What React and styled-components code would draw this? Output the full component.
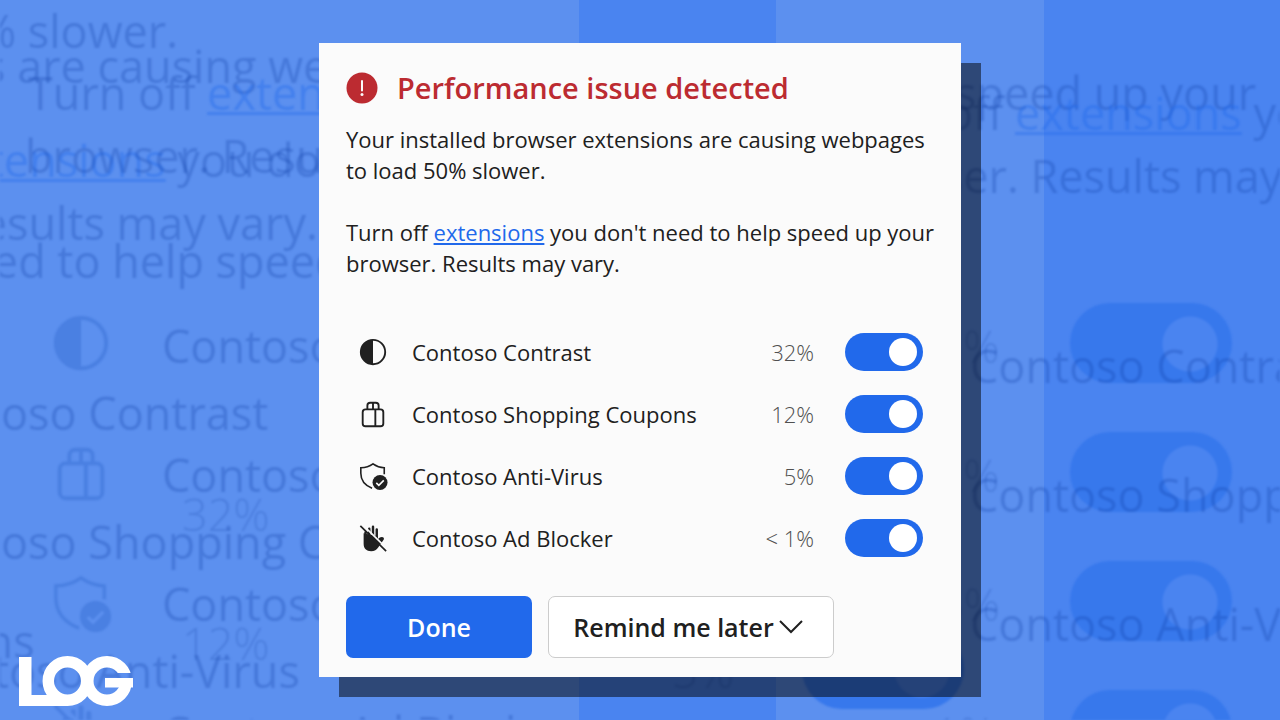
import React, { useState } from 'react';
import styled, { createGlobalStyle } from 'styled-components';

const extensions = [
  { id: 'contrast', name: 'Contoso Contrast', impact: '32%', Icon: ContrastIcon },
  { id: 'coupons', name: 'Contoso Shopping Coupons', impact: '12%', Icon: GiftIcon },
  { id: 'antivirus', name: 'Contoso Anti-Virus', impact: '5%', Icon: ShieldIcon },
  { id: 'adblock', name: 'Contoso Ad Blocker', impact: '< 1%', Icon: HandIcon },
];

// faded lines scattered over the backdrop, y is the top of the line box
const fadedLines = [
  { x: -230, y: -1, text: 'to load 50% slower.' },
  { x: -16, y: 34, text: 's are causing webpages' },
  { x: 28, y: 61, text: 'Turn off ', link: 'extensions' },
  { x: -61, y: 128, link: 'extensions', after: ' you don\'t need' },
  { x: 25, y: 124, text: 'browser. Results may vary.' },
  { x: -46, y: 191, text: 'Results may vary.' },
  { x: -60, y: 229, text: 'need to help speed up' },
  { x: 162, y: 314, text: 'Contoso Contrast' },
  { x: -98, y: 381, text: 'Contoso Contrast' },
  { x: 162, y: 443, text: 'Contoso Shopping' },
  { x: 182, y: 482, text: '32%', light: true },
  { x: -98, y: 510, text: 'Contoso Shopping Coupons' },
  { x: 162, y: 572, text: 'Contoso Anti-Virus' },
  { x: 182, y: 611, text: '12%', light: true },
  { x: -152, y: 609, text: 'Coupons' },
  { x: -90, y: 639, text: 'Contoso Anti-Virus' },
  { x: 162, y: 701, text: 'Contoso Ad Blocker' },
  { x: 672, y: 639, text: '5%', light: true },
  { x: 834, y: -49, text: 'to load 50% slower.' },
  { x: 955, y: 61, text: 'speed up your' },
  { x: 946, y: 81, text: 'off ', link: 'extensions', after: ' you' },
  { x: 834, y: 144, text: 'browser. Results may' },
  { x: 912, y: 314, text: '32%', light: true },
  { x: 912, y: 443, text: '12%', light: true },
  { x: 938, y: 572, text: '5%', light: true },
  { x: 896, y: 701, text: '< 1%', light: true },
  { x: 970, y: 334, text: 'Contoso Contrast' },
  { x: 970, y: 463, text: 'Contoso Shopping' },
  { x: 970, y: 592, text: 'Contoso Anti-Virus' },
];

const fadedSwitches = [
  { x: 1070, y: 303 },
  { x: 1070, y: 432 },
  { x: 1070, y: 561 },
  { x: 1070, y: 690 },
  { x: 802, y: 629 },
];

const fadedIcons = [
  { x: 50, y: 312, Icon: ContrastIcon },
  { x: 50, y: 442, Icon: GiftIcon },
  { x: 50, y: 572, Icon: ShieldIcon },
  { x: 50, y: 700, Icon: HandIcon },
];

function ContrastIcon() {
  return (
    <svg viewBox="0 0 32 32" aria-hidden="true">
      <circle cx="16" cy="16" r="13" fill="none" stroke="currentColor" strokeWidth="2" />
      <path d="M16 3a13 13 0 0 0 0 26z" fill="currentColor" />
    </svg>
  );
}

function GiftIcon() {
  return (
    <svg viewBox="0 0 32 32" fill="none" stroke="currentColor" strokeWidth="2" aria-hidden="true">
      <rect x="5" y="11" width="22" height="18" rx="3" />
      <path d="M10 11V7a3 3 0 0 1 3-3h6a3 3 0 0 1 3 3v4M16 4v7M18.5 11v18" />
    </svg>
  );
}

function ShieldIcon() {
  return (
    <svg viewBox="0 0 32 32" fill="none" aria-hidden="true">
      <path
        d="M15 29C7.500 26 3 21 3 13V7.200C8 7 12.500 5.500 16 3c3.500 2.500 8 4 12 4.200V14"
        stroke="currentColor"
        strokeWidth="1.700"
      />
      <circle cx="23.500" cy="23" r="8" fill="currentColor" />
      <path d="M19.500 23.300l2.700 2.600 5.300-5.300" stroke="var(--cut, #fbfbfb)" strokeWidth="1.700" />
    </svg>
  );
}

function HandIcon() {
  return (
    <svg viewBox="0 0 32 32" fill="none" aria-hidden="true">
      <path
        d="M6 11v11c0 5 3 8 8 8 3.500 0 6-1.500 7.500-4l6-8.500c.6-1.200-.2-2.500-2-2.500-2 0-3.500 1-4.500 3v-4z"
        fill="currentColor"
      />
      <path
        d="M8 16v-6M12 16V6M16 16V4M20 18V7"
        stroke="currentColor"
        strokeWidth="2.600"
        strokeLinecap="round"
      />
      <path d="M4.500 1.500L31.500 28" stroke="var(--cut, #fbfbfb)" strokeWidth="1.800" />
      <path d="M2.500 3l27.500 27" stroke="currentColor" strokeWidth="1.800" />
    </svg>
  );
}

function Backdrop() {
  return (
    <BackdropLayer aria-hidden="true">
      {fadedSwitches.map((item, i) => (
        <FadedSwitch key={i} $x={item.x} $y={item.y} />
      ))}
      {fadedIcons.map(({ x, y, Icon }, i) => (
        <FadedIcon key={i} $x={x} $y={y}>
          <Icon />
        </FadedIcon>
      ))}
      {fadedLines.map((item, i) => (
        <FadedLine key={i} $x={item.x} $y={item.y} $light={item.light}>
          {item.text}
          {item.link && <FadedLink>{item.link}</FadedLink>}
          {item.after}
        </FadedLine>
      ))}
    </BackdropLayer>
  );
}

function ExtensionRow({ id, name, impact, Icon }) {
  const [on, setOn] = useState(true);

  return (
    <Row>
      <RowIcon>
        <Icon />
      </RowIcon>
      <RowName htmlFor={id}>{name}</RowName>
      <Impact>{impact}</Impact>
      <Switch id={id} type="checkbox" role="switch" checked={on} onChange={() => setOn(!on)} />
    </Row>
  );
}

function App() {
  return (
    <Page>
      <GlobalStyle />
      <Backdrop />
      <Dialog role="dialog" aria-labelledby="title">
        <Header>
          <Alert viewBox="0 0 32 32" aria-hidden="true">
            <circle cx="16" cy="16" r="15.500" fill="#bc2b31" />
            <rect x="15" y="8" width="2" height="11.500" rx="1" fill="#fbfbfb" />
            <circle cx="16" cy="22.500" r="1.500" fill="#fbfbfb" />
          </Alert>
          <Title id="title">Performance issue detected</Title>
        </Header>
        <Message>
          Your installed browser extensions are causing webpages
          <br />
          to load 50% slower.
        </Message>
        <Message>
          Turn off <Link href="#extensions">extensions</Link> you don't need to help speed up your
          <br />
          browser. Results may vary.
        </Message>
        <List>
          {extensions.map((item) => (
            <ExtensionRow key={item.id} {...item} />
          ))}
        </List>
        <Actions>
          <DoneButton type="button">Done</DoneButton>
          <LaterButton type="button" aria-haspopup="menu">
            Remind me later
            <Chevron viewBox="0 0 24 24" aria-hidden="true">
              <path d="M1 6l11 11L23 6" fill="none" stroke="currentColor" strokeWidth="2" />
            </Chevron>
          </LaterButton>
        </Actions>
      </Dialog>
      <Logo viewBox="0 0 114 50" role="img" aria-label="LOG">
        <mask id="gap" maskUnits="userSpaceOnUse" x="0" y="0" width="114" height="50">
          <rect width="114" height="50" fill="#ffffff" />
          <rect x="98" y="17" width="16" height="5" fill="#000000" />
        </mask>
        <g fill="#ffffff">
          <rect x="0" y="1" width="12.500" height="49" />
          <rect x="0" y="39" width="48" height="11" />
          <rect x="86" y="22" width="28" height="9.500" />
        </g>
        <g fill="none" stroke="#ffffff" strokeWidth="11.500" mask="url(#gap)">
          <circle cx="48.500" cy="25" r="19.200" />
          <circle cx="88" cy="25" r="19.200" />
        </g>
      </Logo>
    </Page>
  );
}

const GlobalStyle = createGlobalStyle`
  * {
    box-sizing: border-box;
  }

  body {
    margin: 0;
    font-family: 'Open Sans', 'Noto Sans', sans-serif;
    font-size: 22px;
    color: #202020;
  }
`;

const Page = styled.main`
  position: relative;
  min-height: 100vh;
  display: flex;
  align-items: center;
  justify-content: center;
  overflow: hidden;
  background: linear-gradient(
    to right,
    #5c90ef 45.2%,
    #4a84f0 45.2% 60.6%,
    #5c90ef 60.6% 81.6%,
    #4a84f0 81.6%
  );
`;

const BackdropLayer = styled.div`
  position: absolute;
  inset: 0;
  overflow: hidden;
  filter: blur(1px);
`;

const FadedLine = styled.span`
  position: absolute;
  left: ${(props) => props.$x}px;
  top: ${(props) => props.$y}px;
  font-size: 45px;
  font-weight: ${(props) => (props.$light ? 300 : 400)};
  line-height: 64px;
  white-space: pre;
  color: ${(props) => (props.$light ? 'rgba(16, 62, 165, 0.22)' : 'rgba(16, 62, 165, 0.28)')};
`;

const FadedLink = styled.span`
  color: rgba(32, 104, 236, 0.4);
  text-decoration: underline;
  text-decoration-thickness: 3px;
`;

const FadedSwitch = styled.span`
  position: absolute;
  left: ${(props) => props.$x}px;
  top: ${(props) => props.$y}px;
  width: 162px;
  height: 80px;
  border-radius: 40px;
  background: radial-gradient(circle at 120px 41px, #4a84f0 27px, #3778ec 28px);
`;

const FadedIcon = styled.span`
  --cut: #5c90ef;
  position: absolute;
  left: ${(props) => props.$x}px;
  top: ${(props) => props.$y}px;
  width: 62px;
  height: 62px;
  color: #1650bc;
  opacity: 0.25;
`;

const Dialog = styled.section`
  position: relative;
  width: 100%;
  max-width: 642px;
  padding: 24px 24px 19px 27px;
  background-color: #fbfbfb;
  box-shadow: 20px 20px 0 rgba(0, 0, 0, 0.5);
`;

const Header = styled.header`
  display: flex;
  align-items: center;
  gap: 19px;
  height: 42px;
  margin-bottom: 15px;
`;

const Alert = styled.svg`
  width: 32px;
  height: 32px;
`;

const Title = styled.h1`
  margin: 0;
  font-size: 29px;
  font-weight: 600;
  line-height: 38px;
  color: #bc2b31;
`;

const Message = styled.p`
  margin: 0 0 31px;
  line-height: 31px;
`;

const Link = styled.a`
  color: #2169eb;
  text-underline-offset: 2px;
`;

const List = styled.ul`
  margin: 42px 0 27px;
  padding: 0 14px 0 12px;
  list-style: none;
`;

const Row = styled.li`
  display: flex;
  align-items: center;
  height: 62px;
`;

const RowIcon = styled.span`
  display: flex;
  width: 30px;
  height: 30px;
  margin-right: 24px;

  svg {
    width: 100%;
    height: 100%;
  }
`;

const RowName = styled.label`
  flex: 1;
`;

const Impact = styled.span`
  margin-right: 31px;
  font-weight: 300;
  color: #505050;
`;

const Switch = styled.input`
  appearance: none;
  width: 78px;
  height: 38px;
  margin: 0;
  border-radius: 19px;
  display: flex;
  align-items: center;
  justify-content: ${(props) => (props.checked ? 'flex-end' : 'flex-start')};
  padding: 0 6px;
  background-color: ${(props) => (props.checked ? '#2169eb' : '#8a8a8a')};
  cursor: pointer;

  &::before {
    content: '';
    width: 28px;
    height: 28px;
    border-radius: 50%;
    background-color: #ffffff;
  }
`;

const Actions = styled.div`
  display: flex;
  gap: 16px;
`;

const Button = styled.button`
  display: flex;
  align-items: center;
  justify-content: center;
  height: 62px;
  border-radius: 7px;
  font-family: inherit;
  font-size: 25px;
  font-weight: 600;
  cursor: pointer;
`;

const DoneButton = styled(Button)`
  width: 186px;
  border: none;
  background-color: #2169eb;
  color: #ffffff;
`;

const LaterButton = styled(Button)`
  gap: 5px;
  width: 286px;
  padding: 0 6px 0 0;
  border: 1px solid #cccccc;
  background-color: #ffffff;
  color: #202020;
`;

const Chevron = styled.svg`
  width: 24px;
  height: 24px;
`;

const Logo = styled.svg`
  position: absolute;
  left: 19px;
  bottom: 14px;
  width: 114px;
  height: 50px;
`;

export default App;
